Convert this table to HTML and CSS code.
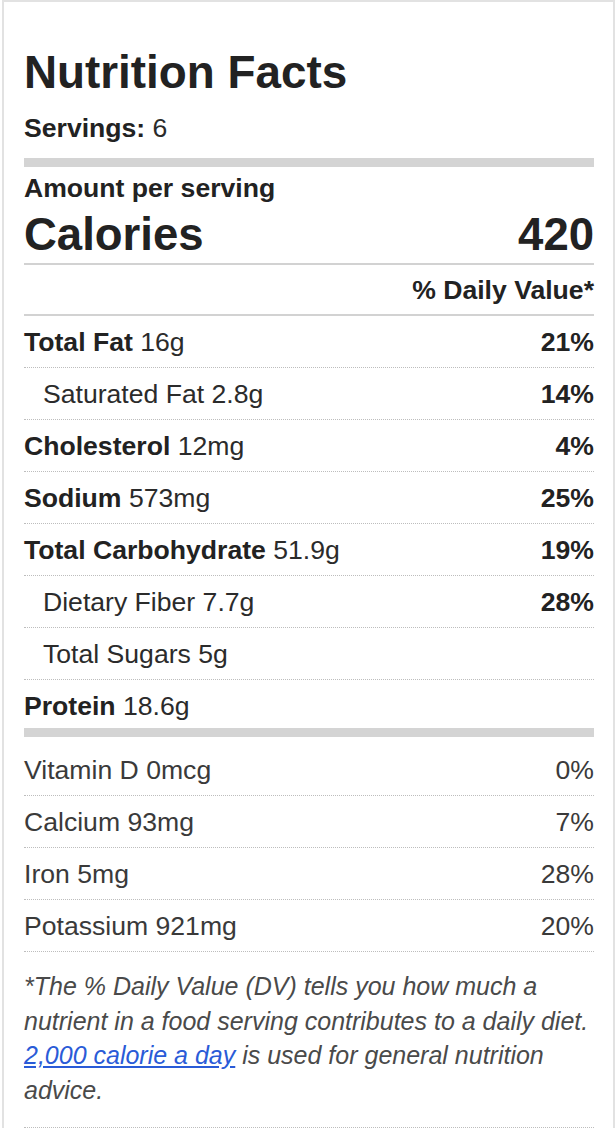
FILE: index.html
```html
<!DOCTYPE html>
<html lang="en">
<head>
<meta charset="utf-8">
<title>Nutrition Facts</title>
<link rel="stylesheet" href="styles.css">
</head>
<body>
<div class="label">
  <h1 class="title">Nutrition Facts</h1>
  <div class="servings"><b>Servings:</b> 6</div>
  <div class="bar"></div>
  <div class="amount">Amount per serving</div>
  <div class="calories"><span>Calories</span><span>420</span></div>
  <div class="dv-head">% Daily Value*</div>
  <div class="row"><span><b>Total Fat</b> 16g</span><b>21%</b></div>
  <div class="row sub"><span>Saturated Fat 2.8g</span><b>14%</b></div>
  <div class="row"><span><b>Cholesterol</b> 12mg</span><b>4%</b></div>
  <div class="row"><span><b>Sodium</b> 573mg</span><b>25%</b></div>
  <div class="row"><span><b>Total Carbohydrate</b> 51.9g</span><b>19%</b></div>
  <div class="row sub"><span>Dietary Fiber 7.7g</span><b>28%</b></div>
  <div class="row sub"><span>Total Sugars 5g</span></div>
  <div class="row last"><span><b>Protein</b> 18.6g</span></div>
  <div class="bar bar-mid"></div>
  <div class="row vit"><span>Vitamin D 0mcg</span><span>0%</span></div>
  <div class="row vit"><span>Calcium 93mg</span><span>7%</span></div>
  <div class="row vit"><span>Iron 5mg</span><span>28%</span></div>
  <div class="row vit"><span>Potassium 921mg</span><span>20%</span></div>
  <p class="note">*The % Daily Value (DV) tells you how much a nutrient in a food serving contributes to a daily diet. <a href="#">2,000 calorie a day</a> is used for general nutrition advice.</p>
</div>
</body>
</html>
```
FILE: styles.css
```css
*, *::before, *::after {
  box-sizing: border-box;
}
html, body {
  margin: 0;
  padding: 0;
  background: #fff;
}
body {
  font-family: "Liberation Sans", Arial, Helvetica, sans-serif;
  color: #2b2b2b;
  overflow: hidden;
}
.label {
  margin-left: 2px;
  width: 613px;
  border: 2px solid #e2e2e2;
  border-bottom: none;
  padding: 45px 19px 40px 20px;
}
.title {
  margin: 0;
  font-size: 45.8px;
  line-height: 52px;
  font-weight: bold;
  color: #222;
}
.servings {
  margin-top: 14px;
  font-size: 26.6px;
  line-height: 30px;
}
.servings b { color: #222; }
.bar {
  height: 9px;
  background: #d4d4d4;
  margin-top: 15px;
}
.amount {
  margin-top: 6px;
  font-size: 26.6px;
  line-height: 30px;
  font-weight: bold;
  color: #222;
}
.calories {
  display: flex;
  justify-content: space-between;
  margin-top: 6px;
  font-size: 45.5px;
  line-height: 52px;
  font-weight: bold;
  color: #222;
  padding-bottom: 2px;
  border-bottom: 2px solid #d2d2d2;
}
.dv-head {
  text-align: right;
  font-size: 26.6px;
  line-height: 30px;
  font-weight: bold;
  color: #222;
  padding: 10px 0 9px;
  border-bottom: 2px solid #d2d2d2;
}
.row {
  display: flex;
  justify-content: space-between;
  font-size: 26.6px;
  line-height: 30px;
  padding: 11px 0 10px;
  border-bottom: 1px dotted #bdbdbd;
}
.row b { color: #222; }
.row.sub { padding-left: 19px; }
.row.last {
  border-bottom: none;
  padding-bottom: 0;
}
.bar-mid {
  margin: 7px 0 7px;
}
.row.vit { color: #3a3a3a; }
.note {
  margin: 0;
  padding: 17px 0 20px;
  font-size: 25px;
  line-height: 34.6px;
  font-style: italic;
  color: #4a4a4a;
  border-bottom: 1px dotted #bdbdbd;
}
.note a {
  color: #2a5bd7;
  text-decoration: underline;
}
```
